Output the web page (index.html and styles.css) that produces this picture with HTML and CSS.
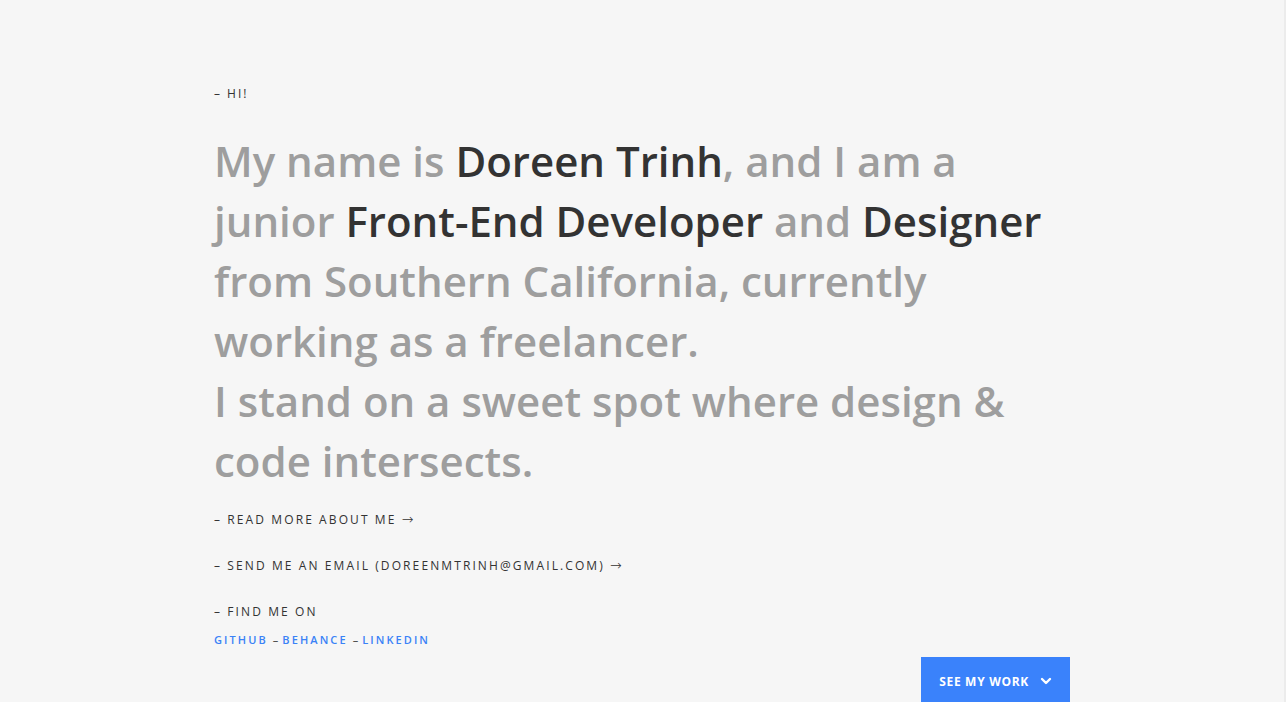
FILE: index.html
```html
<!DOCTYPE html>
<html>
<head>
<meta charset="utf-8">
<link rel="stylesheet" href="styles.css">
</head>
<body>
<main class="hero">
  <p class="eyebrow">– HI!</p>
  <h1 class="intro">My name is <span class="hl">Doreen Trinh</span>, and I am a junior <span class="hl">Front-End Developer</span> and <span class="hl">Designer</span> from Southern California, currently working as a freelancer.<br>I stand on a sweet spot where design &amp; code intersects.</h1>
  <p class="item">– READ MORE ABOUT ME <span class="arrow">→</span></p>
  <p class="item">– SEND ME AN EMAIL (DOREENMTRINH@GMAIL.COM) <span class="arrow">→</span></p>
  <p class="item find">– FIND ME ON</p>
  <p class="links"><a href="#">GITHUB</a> <span class="sep">–</span><a href="#">BEHANCE</a> <span class="sep">–</span><a href="#">LINKEDIN</a></p>
  <div class="actions">
    <a class="btn" href="#">SEE MY WORK
      <svg width="12" height="12" viewBox="0 0 12 12"><path d="M2 4 L6 8 L10 4" fill="none" stroke="#fff" stroke-width="2.4" stroke-linecap="round" stroke-linejoin="round"/></svg>
    </a>
  </div>
</main>
</body>
</html>
```
FILE: styles.css
```css
html, body {
  margin: 0;
  padding: 0;
  background: #f6f6f6;
  height: 100%;
  overflow: hidden;
}
body {
  font-family: "Open Sans", "Liberation Sans", sans-serif;
  color: #333;
  border-right: 2px solid #ececec;
  box-sizing: border-box;
}
.hero {
  width: 856px;
  margin: 0 auto;
  padding-top: 85px;
}
.eyebrow {
  margin: 0;
  font-size: 12px;
  line-height: 18px;
  letter-spacing: 2px;
  color: #333;
}
.intro {
  margin: 28px 0 0;
  font-size: 42px;
  line-height: 60px;
  font-weight: 600;
  color: #9e9e9e;
  max-width: 840px;
}
.hl {
  color: #333;
}
.item {
  margin: 0;
  font-size: 12px;
  line-height: 18px;
  height: 18px;
  letter-spacing: 2.1px;
  color: #333;
}
.arrow {
  font-family: "DejaVu Sans", sans-serif;
  font-size: 14px;
  line-height: 0;
  letter-spacing: 0;
  font-weight: 300;
}
.intro + .item { margin-top: 20px; }
.item + .item { margin-top: 28px; }
.links {
  margin: 11px 0 0;
  font-size: 11px;
  line-height: 16px;
  letter-spacing: 2.1px;
  color: #333;
}
.links a {
  color: #3a82f7;
  text-decoration: none;
  font-weight: 600;
}
.sep {
  letter-spacing: 4px;
}
.actions {
  display: flex;
  justify-content: flex-end;
  margin-top: 9px;
}
.btn {
  display: flex;
  align-items: center;
  gap: 11px;
  background: #3a82fb;
  color: #fff;
  text-decoration: none;
  font-weight: 700;
  font-size: 12px;
  letter-spacing: 0.7px;
  height: 48px;
  padding: 0 18px 0 18px;
}
```
